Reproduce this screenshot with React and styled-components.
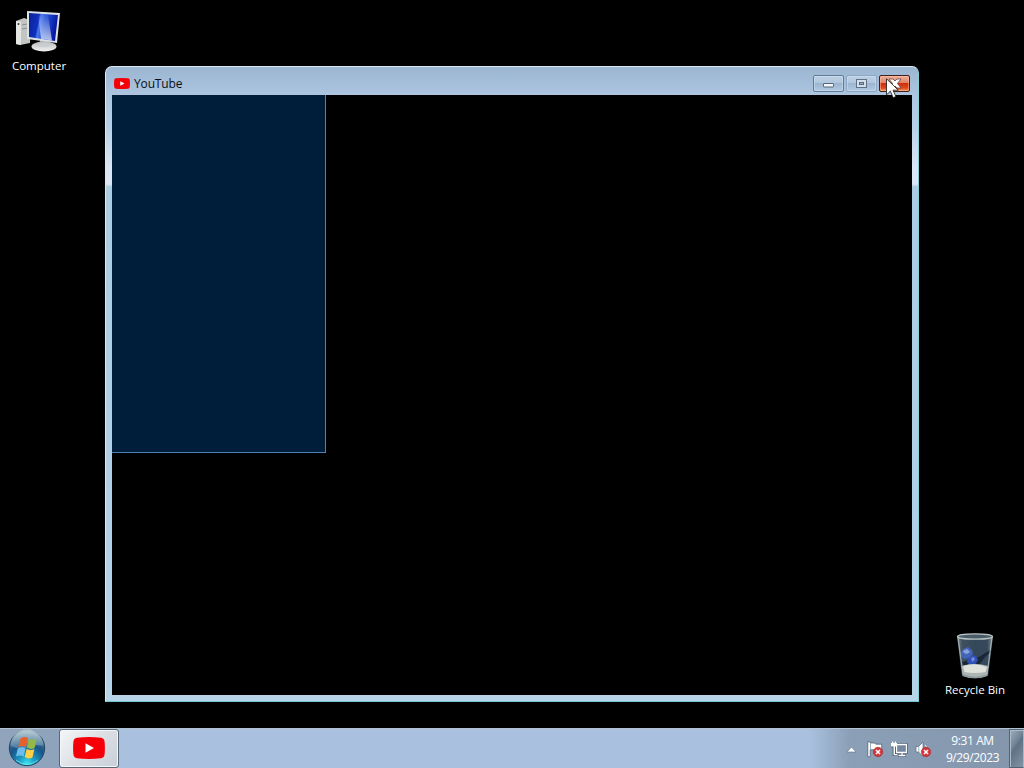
import styled, { createGlobalStyle } from "styled-components";

const GlobalStyle = createGlobalStyle`
  * {
    box-sizing: border-box;
  }

  body {
    margin: 0;
    background: #000;
    font-family: "Open Sans", "Noto Sans", sans-serif;
    font-size: 12px;
    overflow: hidden;
    cursor: default;
  }

  svg {
    display: block;
    flex-shrink: 0;
  }
`;

const Screen = styled.div`
  display: flex;
  flex-direction: column;
  width: 1024px;
  height: 768px;
`;

const Desktop = styled.main`
  position: relative;
  flex: 1;
  background: #000;
`;

const Shortcut = styled.div`
  position: absolute;
  left: ${(props) => props.$x}px;
  top: ${(props) => props.$y}px;
  width: 78px;
  display: flex;
  flex-direction: column;
  align-items: center;
  gap: 2px;
  color: #fff;
  line-height: 16px;
  white-space: nowrap;
`;

const ShortcutLabel = styled.span`
  font-size: 11.5px;
`;

const Window = styled.section`
  position: absolute;
  left: 105px;
  top: 66px;
  width: 814px;
  height: 636px;
  display: flex;
  flex-direction: column;
  padding: 0 6px 6px;
  border: 1px solid;
  border-color: #d8e8f5 #83cfdb #74c5d2 #dce9f4;
  border-radius: 7px 7px 0 0;
  background: linear-gradient(
    #9bb6d2 0,
    #adc5df 28px,
    #b8d0e7 60px,
    #d9e6f5 100px,
    #dce8f6 117px,
    #abcce1 120px,
    #b4d2e8 600px,
    #b7d5e8 100%
  );
`;

const TitleBar = styled.header`
  height: 28px;
  display: flex;
  align-items: center;
  padding: 5px 2px 0;
  gap: 4px;
  color: #0b1018;
`;

const Title = styled.span`
  flex: 1;
  font-size: 12px;
  line-height: 16px;
  letter-spacing: -0.15px;
`;

const Controls = styled.div`
  display: flex;
  gap: 2px;
`;

const ControlButton = styled.button`
  width: 31px;
  height: 17px;
  display: flex;
  align-items: center;
  justify-content: center;
  padding: 0;
  border: 1px solid ${(props) => (props.$close ? "#40201f" : props.$dim ? "#8ea6c2" : "#627b97")};
  border-radius: 2px;
  background: ${(props) =>
    props.$close
      ? "linear-gradient(#edb09b, #df8268 45%, #d02e0c 50%, #e0471f 80%, #f49c61)"
      : "linear-gradient(#bdd0e4, #b1c7de 48%, #9db6d0 50%, #b1c9e1)"};
  box-shadow: inset 0 0 0 1px ${(props) => (props.$close ? "#ffc2a080" : "#d4e3f280")};
`;

const Client = styled.div`
  flex: 1;
  background: #000;
`;

const Selection = styled.div`
  width: 214px;
  height: 358px;
  background: #001d39;
  border: solid #5180b5;
  border-width: 0 1px 1px 0;
`;

const Cursor = styled.div`
  position: absolute;
  left: 886px;
  top: 78px;
`;

const Taskbar = styled.footer`
  height: 40px;
  display: flex;
  border-top: 1px solid #b3c2d2;
  background: linear-gradient(90deg, #91a4bc, #8fa3bd 60px, #a9c1de 120px, #a9c1de 810px, #8b9fb6 850px, #8295ab);
`;

const StartButton = styled.div`
  width: 59px;
  padding-left: 8px;
`;

const TaskButton = styled.div`
  width: 60px;
  height: 39px;
  display: flex;
  align-items: center;
  justify-content: center;
  padding-bottom: 1px;
  border: 1px solid #586674;
  border-radius: 3px;
  background: linear-gradient(135deg, #f4f6f8, #dce0e5 50%, #c8cfd8);
  box-shadow: inset 0 0 0 1px #f4f7fa;
`;

const Tray = styled.div`
  margin-left: auto;
  display: flex;
  align-items: center;
`;

const TrayIcons = styled.div`
  display: flex;
  align-items: center;
  gap: 7px;
  padding: 2px 4px 0 0;
`;

const Clock = styled.div`
  width: 73px;
  text-align: center;
  color: #fff;
  font-size: 12px;
  line-height: 17px;
  letter-spacing: -0.4px;
`;

const ShowDesktop = styled.div`
  width: 15px;
  height: 39px;
  border: 1px solid #536274;
  border-right-color: #a8b6c5;
  background: linear-gradient(125deg, #a1afbd, #718396 38%, #5f7185 46%, #8394a7);
  box-shadow: inset 1px 1px 0 #aebbc8;
`;

function YouTubeIcon({ width, height }) {
  return (
    <svg width={width} height={height} viewBox="0 0 32 22">
      <path fill="#f50009" d="M4 .7Q16-.5 28 .7q3.3.4 3.6 4 .6 6.3 0 12.6-.3 3.6-3.6 4-12 1.2-24 0-3.3-.4-3.6-4-.6-6.3 0-12.6Q.7 1.1 4 .7z" />
      <path fill="#fff" d="M12.5 6.3v9.4l8.5-4.7z" />
    </svg>
  );
}

function ComputerIcon() {
  return (
    <svg width="48" height="48" viewBox="0 0 48 48">
      <defs>
        <linearGradient id="screen" x1="0" y1="0" x2="1" y2="0.2">
          <stop offset="0" stopColor="#0a2390" />
          <stop offset="0.36" stopColor="#102fc4" />
          <stop offset="0.42" stopColor="#4a78e6" />
          <stop offset="0.6" stopColor="#2350d8" />
          <stop offset="1" stopColor="#0718a0" />
        </linearGradient>
        <linearGradient id="glare" x1="0" y1="0" x2="0" y2="1">
          <stop offset="0" stopColor="#fff" stopOpacity="0" />
          <stop offset="1" stopColor="#e8f3ff" stopOpacity=".75" />
        </linearGradient>
        <linearGradient id="stand" x1="0" y1="0" x2="0" y2="1">
          <stop offset="0" stopColor="#b4b7b8" />
          <stop offset="1" stopColor="#f5f5f2" />
        </linearGradient>
      </defs>
      <path fill="#c3c5c3" d="M1 13l8-3 6 2v23l-10 2-4-1z" />
      <path fill="#e4e6e3" d="M1 13l5 1v23l-5-1z" />
      <path stroke="#8a8e8d" d="M7 17l5-1M7 21l5-1" />
      <circle cx="3.500" cy="16" r="1" fill="#30343a" />
      <path fill="#aaaeaf" d="M25 32l8 1v6h-8z" />
      <ellipse cx="29" cy="38.500" rx="12.500" ry="5" fill="url(#stand)" />
      <ellipse cx="29" cy="36.500" rx="7" ry="2" fill="#c9cccc" />
      <path fill="#dce2e5" d="M12 3l33 2-3 30-30-4z" />
      <path fill="url(#screen)" d="M14 5l29 2-3 26-26-4z" />
      <path fill="url(#glare)" d="M23 5.600l10 .700L37 32.500l-11-1.700z" />
    </svg>
  );
}

function RecycleBinIcon() {
  return (
    <svg width="48" height="48" viewBox="0 0 48 48">
      <defs>
        <linearGradient id="glass">
          <stop offset="0" stopColor="#84919b" />
          <stop offset="0.14" stopColor="#3f515f" />
          <stop offset="0.5" stopColor="#34485a" />
          <stop offset="0.84" stopColor="#36495a" />
          <stop offset="1" stopColor="#899899" />
        </linearGradient>
      </defs>
      <path fill="url(#glass)" d="M6 4h36l-5 40q-13 5-26 0z" />
      <path fill="#14212d" d="M39 18l1 2-6 5-5 7-16 2-2-4 8-2 9-3z" opacity=".8" />
      <path fill="#4464b8" d="M10 21l2-4 5-2 4 3 1 4-4 4-5 1-3-3z" />
      <path fill="#86a3e0" d="M12 19l4-2 3 3-3 2-3-1z" />
      <path fill="#3050b5" d="M17 27l4-4 4 1 2 4-3 5-5 0-3-3z" />
      <path fill="#6d88e4" d="M20 26l3-1 1 3-3 2z" />
      <path fill="#aeb6b3" d="M10.500 34q13-4 27 0l-1.500 10q-12 4-24 0z" />
      <path fill="#dfe1db" d="M12 34q12-4 24 1l-1.500 5q-11 2-21 0z" />
      <path fill="none" stroke="#8f9d9c" strokeWidth="1.500" d="M12 43q12 5 24 0" />
      <path fill="none" stroke="#a5b2b6" d="M7 5l5 38M41 5l-5 38" />
      <ellipse cx="24" cy="4.500" rx="17.500" ry="2.700" fill="#4a5d69" stroke="#b8c3c3" strokeWidth="1.300" />
    </svg>
  );
}

function StartOrb() {
  return (
    <svg width="38" height="38" viewBox="0 0 38 38">
      <defs>
        <radialGradient id="orb" cx="50%" cy="94%" r="88%">
          <stop offset="0" stopColor="#3ce6f2" />
          <stop offset="0.27" stopColor="#1d98c4" />
          <stop offset="0.6" stopColor="#17568a" />
          <stop offset="1" stopColor="#4c7592" />
        </radialGradient>
        <linearGradient id="shine" x1="0" y1="0" x2="0" y2="1">
          <stop offset="0" stopColor="#e1eef2" stopOpacity=".75" />
          <stop offset="1" stopColor="#bfd2dc" stopOpacity=".25" />
        </linearGradient>
      </defs>
      <circle cx="19" cy="19" r="17.700" fill="url(#orb)" stroke="#26465f" />
      <path fill="url(#shine)" d="M2.500 17A16.500 16.500 0 0 1 35.500 17Q27 15 19 18.500 10 21 2.500 17z" />
      <path fill="#e4602c" d="M12.500 9.500q4-2.500 7.500-.5l-2 9q-3.500-2-7.800 0z" />
      <path fill="#92b848" d="M21 9.500q3.500 2.200 7.800.5l-2.200 9q-4 2-7.600-.500z" />
      <path fill="#6dbdec" d="M9.800 19.300q4.200-2 7.800 0l-2 8.200q-3.600-2-7.600 0z" />
      <path fill="#ffd045" d="M18.700 19.800q3.600 2.200 7.700.5l-2 8.200q-4 2-7.700-.5z" />
      <path fill="none" stroke="#76eff1" opacity=".7" d="M8 31q11 9 22 0" />
    </svg>
  );
}

function ErrorBadge() {
  return (
    <>
      <circle cx="11" cy="11" r="4.700" fill="#d5363c" stroke="#a92730" strokeWidth=".6" />
      <path stroke="#fff" strokeWidth="1.500" d="M9 9l4 4M13 9l-4 4" />
    </>
  );
}

function FlagIcon() {
  return (
    <svg width="17" height="17" viewBox="0 0 17 17">
      <path fill="#fff" stroke="#45566a" strokeWidth=".7" d="M.8.800h2.400V2h4l2 1.200h5.500V10H9L7.500 8.800H3.200v7H.8z" />
      <path stroke="#8d9db0" strokeWidth=".8" d="M3.500 2v7" />
      <ErrorBadge />
    </svg>
  );
}

function NetworkIcon() {
  return (
    <svg width="17" height="17" viewBox="0 0 17 17">
      <path fill="none" stroke="#3d4d60" strokeWidth="2.600" d="M5.500 3.500h10v8h-10zM7 14.500h8M11 12v2M1.500 2v3h3V2M3 5v8.500h3" />
      <path fill="#7489a0" stroke="#fff" strokeWidth="1.300" d="M5.500 3.500h10v8h-10z" />
      <path fill="#fff" d="M0 2h1V.5h1.200V2h1.600V.5H5V2h1v3.500H4v7.500h2v1.200H2.500V5.500H0z" />
      <path stroke="#fff" strokeWidth="1.300" d="M7.500 14.500h7M11 12v2" />
    </svg>
  );
}

function VolumeIcon() {
  return (
    <svg width="17" height="17" viewBox="0 0 17 17">
      <path fill="#fff" stroke="#536476" strokeWidth=".7" d="M1 5.500h2.500L8 1v14.500L3.500 11H1z" />
      <path stroke="#8294a8" strokeWidth=".8" d="M3.800 5.500v5.500" />
      <path fill="none" stroke="#e7edf3" d="M10 4q1.500 1 1.500 3" />
      <ErrorBadge />
    </svg>
  );
}

function App() {
  return (
    <>
      <GlobalStyle />
      <Screen>
        <Desktop>
          <Shortcut $x={0} $y={8}>
            <ComputerIcon />
            <ShortcutLabel>Computer</ShortcutLabel>
          </Shortcut>

          <Window>
            <TitleBar>
              <YouTubeIcon width={16} height={11} />
              <Title>YouTube</Title>
              <Controls>
                <ControlButton aria-label="Minimize">
                  <svg width="13" height="9" viewBox="0 0 13 9">
                    <rect x="1.500" y="4.500" width="10" height="3.500" rx=".5" fill="#f3f6fa" stroke="#56677b" />
                  </svg>
                </ControlButton>
                <ControlButton $dim aria-label="Maximize">
                  <svg width="13" height="11" viewBox="0 0 13 11">
                    <rect x="1.500" y="1.500" width="10" height="8" fill="#d4dfeb" stroke="#5f7186" />
                    <rect x="4.500" y="4.500" width="4" height="2" fill="#9db3cb" stroke="#56677b" />
                  </svg>
                </ControlButton>
                <ControlButton $close aria-label="Close">
                  <svg width="14" height="11" viewBox="0 0 14 11">
                    <path fill="#fff" stroke="#684343" strokeWidth=".8" d="M1 1h4l2 2 2-2h4L9.500 5.500 13 10H9L7 8l-2 2H1l3.500-4.500z" />
                  </svg>
                </ControlButton>
              </Controls>
            </TitleBar>
            <Client>
              <Selection />
            </Client>
          </Window>

          <Shortcut $x={936} $y={632}>
            <RecycleBinIcon />
            <ShortcutLabel>Recycle Bin</ShortcutLabel>
          </Shortcut>

          <Cursor>
            <svg width="13" height="21" viewBox="0 0 13 21">
              <path fill="#fff" stroke="#111" strokeWidth=".8" d="M.5.800v16l3.800-3.600 2.900 6.500 2.700-1.200-2.900-6.300h5.300z" />
            </svg>
          </Cursor>
        </Desktop>

        <Taskbar>
          <StartButton>
            <StartOrb />
          </StartButton>
          <TaskButton>
            <YouTubeIcon width={32} height={22} />
          </TaskButton>
          <Tray>
            <TrayIcons>
              <svg width="17" height="9" viewBox="0 0 17 9">
                <path fill="#fff" stroke="#607389" strokeWidth=".6" d="M4 7l4.500-5L13 7z" />
              </svg>
              <FlagIcon />
              <NetworkIcon />
              <VolumeIcon />
            </TrayIcons>
            <Clock>
              <div>9:31 AM</div>
              <div>9/29/2023</div>
            </Clock>
            <ShowDesktop />
          </Tray>
        </Taskbar>
      </Screen>
    </>
  );
}

export default App;
